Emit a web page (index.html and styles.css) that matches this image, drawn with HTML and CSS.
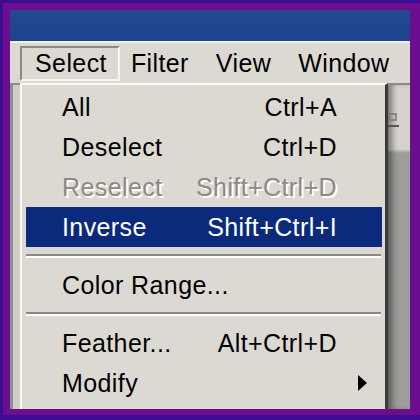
FILE: index.html
```html
<!DOCTYPE html>
<html lang="en">
<head>
<meta charset="UTF-8">
<title>Select menu</title>
<link rel="stylesheet" href="styles.css">
</head>
<body>
<div class="frame">
  <div class="titlebar"></div>
  <div class="menubar">
    <span class="menu-item open">Select</span>
    <span class="menu-item">Filter</span>
    <span class="menu-item">View</span>
    <span class="menu-item">Window</span>
  </div>
  <div class="workspace">
    <div class="side-left"></div>
    <div class="dropdown">
      <div class="item"><span>All</span><span class="keys">Ctrl+A</span></div>
      <div class="item"><span>Deselect</span><span class="keys">Ctrl+D</span></div>
      <div class="item disabled"><span>Reselect</span><span class="keys">Shift+Ctrl+D</span></div>
      <div class="item active"><span>Inverse</span><span class="keys">Shift+Ctrl+I</span></div>
      <div class="sep"></div>
      <div class="item"><span>Color Range...</span></div>
      <div class="sep"></div>
      <div class="item"><span>Feather...</span><span class="keys">Alt+Ctrl+D</span></div>
      <div class="item"><span>Modify</span><span></span><span class="sub"><i class="arrow"></i></span></div>
    </div>
    <div class="side-right">
      <svg class="tool" width="12" height="16" viewBox="0 0 12 16">
        <rect x="1" y="1" width="7" height="6" fill="none" stroke="#7a7a7a" stroke-width="1.5"/>
        <line x1="0" y1="13" x2="11" y2="13" stroke="#555" stroke-width="2"/>
      </svg>
    </div>
  </div>
</div>
</body>
</html>
```
FILE: styles.css
```css
body {
  margin: 0;
  width: 420px;
  height: 420px;
  overflow: hidden;
  background: #3c0c92; /* outer indigo edge */
  font-family: 'Liberation Sans', Arial, sans-serif;
  font-size: 25px;
  letter-spacing: 0.4px;
  color: #000;
}
.frame {
  margin: 3px 0 0 3px;
  width: 400px;
  height: 399px;
  border-style: solid;
  border-color: #6b0d8e;
  border-width: 7px 10px 6px 7px;
  display: flex;
  flex-direction: column;
  overflow: hidden;
}
.titlebar {
  height: 31px;
  background: linear-gradient(#24498f, #1f438c);
  border-bottom: 2px solid #f0eee8;
}
.menubar {
  height: 40px;
  display: flex;
  align-items: center;
  padding-left: 10px;
  background: #dcd9d2;
}
.menu-item {
  padding: 0 16px 0 11px;
  line-height: 31px;
}
.menu-item.open {
  padding: 0 11px 0 13px;
  border: 2px solid;
  border-color: #8c8a84 #f6f5f1 #f6f5f1 #8c8a84;
}
.workspace {
  flex: 1;
  display: flex;
}
.side-left {
  width: 10px;
  box-sizing: border-box;
  border-top: 2px solid #8a8a8a;
  border-left: 3px solid #8f8f8f;
  background: #d0cdc6;
}
.dropdown {
  width: 368px;
  box-sizing: border-box;
  padding: 2px 3px 0 4px;
  border-top: 2px solid #fbfaf7;
  border-left: 2px solid #fbfaf7;
  border-right: 3px solid #3a3a3a;
  background: #dcd9d2;
}
.item {
  height: 40px;
  line-height: 40px;
  display: grid;
  grid-template-columns: 1fr auto 45px;
  padding-left: 36px;
  white-space: nowrap;
}
.item.active {
  background: #0b2a7c;
  color: #fff;
}
.item.disabled {
  color: #8d8a84;
  text-shadow: 2px 2px 0 #fff;
}
.sub {
  display: flex;
  align-items: center;
  padding-left: 21px;
}
.arrow {
  width: 0;
  height: 0;
  border-left: 9px solid #000;
  border-top: 8px solid transparent;
  border-bottom: 8px solid transparent;
}
.sep {
  border-top: 2px solid #8b8985;
  border-bottom: 2px solid #fff;
  margin: 7px 1px 7px 0;
}
.side-right {
  flex: 1;
  border-top: 2px solid #8a8a8a;
  background: linear-gradient(#d6d3cc 0, #d6d3cc 64px, #9d9d9b 68px);
  box-shadow: inset 7px 0 6px -3px rgba(0, 0, 0, 0.45);
}
.tool {
  display: block;
  margin: 28px 0 0 0;
}
```
